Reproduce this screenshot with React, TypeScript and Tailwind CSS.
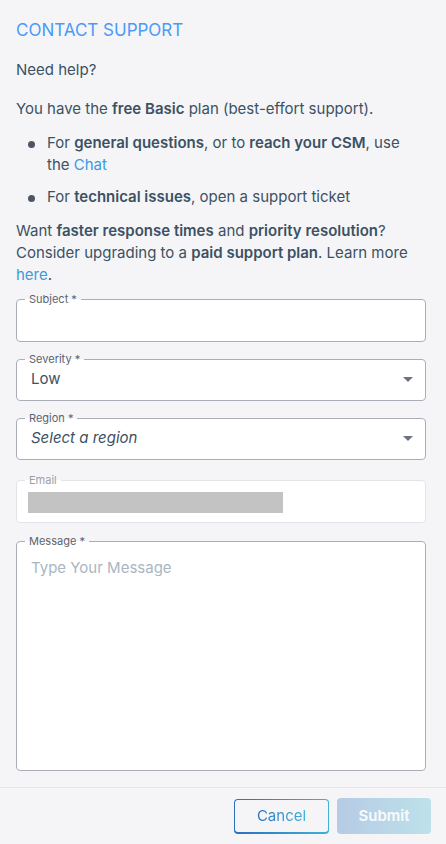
import React from "react";

const font = { fontFamily: "Inter, 'Noto Sans', sans-serif" };

function Caret() {
  return (
    <svg width="10" height="5" viewBox="0 0 10 5" className="shrink-0" aria-hidden="true">
      <path d="M0 0h10L5 5z" fill="#6b7280" />
    </svg>
  );
}

function Field({
  label,
  required = true,
  disabled = false,
  className = "",
  children,
}: {
  label: string;
  required?: boolean;
  disabled?: boolean;
  className?: string;
  children?: React.ReactNode;
}) {
  const border = disabled ? "border-[#e3e4e8]" : "border-[#a9adb8]";
  const labelColor = disabled ? "text-[#9aa0aa]" : "text-[#5b6270]";
  return (
    <fieldset className={`rounded border bg-white px-[14px] ${border} ${className}`}>
      <legend className={`ml-[-6px] px-[4px] text-[11px] leading-[14px] ${labelColor}`}>
        {label}
        {required ? " *" : ""}
      </legend>
      {children}
    </fieldset>
  );
}

export default function App() {
  return (
    <div style={font} className="flex min-h-[844px] w-[446px] flex-col bg-[#f5f5f8] text-[#3c5163]">
      <div className="flex flex-col px-4 pt-[20px]">
        <h1 className="text-[17px] leading-[20px] text-[#4a9af6]">CONTACT SUPPORT</h1>
        <p className="mt-[20px] text-[15px] leading-[20px]">Need help?</p>
        <p className="mt-[18px] text-[15px] leading-[22px]">
          You have the <b className="font-semibold">free Basic</b> plan (best-effort support).
        </p>
        <ul className="mt-[12px] flex flex-col gap-[10px] pl-[31px] pr-[14px] text-[15px] leading-[22px]">
          <li className="relative">
            <span className="absolute left-[-19px] top-[9px] h-[7px] w-[7px] rounded-full bg-[#4d5763]" />
            For <b className="font-semibold">general questions</b>, or to{" "}
            <b className="font-semibold">reach your CSM</b>, use the{" "}
            <span className="text-[#3b9ae1]">Chat</span>
          </li>
          <li className="relative">
            <span className="absolute left-[-19px] top-[9px] h-[7px] w-[7px] rounded-full bg-[#4d5763]" />
            For <b className="font-semibold">technical issues</b>, open a support ticket
          </li>
        </ul>
        <p className="mt-[12px] text-[15px] leading-[22px]">
          Want <b className="font-semibold">faster response times</b> and{" "}
          <b className="font-semibold">priority resolution</b>? Consider upgrading to a{" "}
          <b className="font-semibold">paid support plan</b>. Learn more{" "}
          <span className="text-[#3b9ae1]">here</span>.
        </p>

        <div className="mr-[4px] mt-[6px] flex flex-col gap-[10px]">
          <Field label="Subject" className="h-[50px]" />
          <Field label="Severity" className="h-[49px]">
            <div className="flex items-center justify-between pb-[7px] pt-[3px] text-[15px] leading-[20px]">
              <span>Low</span>
              <span className="mr-[-2px]">
                <Caret />
              </span>
            </div>
          </Field>
          <Field label="Region" className="h-[49px]">
            <div className="flex items-center justify-between pb-[7px] pt-[3px] text-[15px] leading-[20px]">
              <span className="italic">Select a region</span>
              <span className="mr-[-2px]">
                <Caret />
              </span>
            </div>
          </Field>
          <Field label="Email" required={false} disabled className="mt-[3px] h-[50px]">
            <div className="ml-[-3px] pt-[5px]">
              <div className="h-[21px] w-[255px] bg-[#c3c3c3]" />
            </div>
          </Field>
          <Field label="Message" className="mt-[1px] h-[237px]">
            <p className="pt-[10px] text-[15px] leading-[20px] text-[#a9b6c2]">Type Your Message</p>
          </Field>
        </div>
      </div>

      <div className="mt-[16px] flex justify-end gap-[8px] border-t border-[#e6e7ea] px-[15px] pb-[10px] pt-[11px]">
        <div className="rounded-[4px] bg-gradient-to-r from-[#2e6fbd] to-[#3db2d8] p-px">
          <div className="flex h-[32px] w-[93px] items-center justify-center rounded-[3px] bg-[#f5f5f8]">
            <span className="bg-gradient-to-r from-[#2e72bf] to-[#3fb0d6] bg-clip-text text-[15px] text-transparent">
              Cancel
            </span>
          </div>
        </div>
        <div className="mt-[-1px] flex h-[36px] w-[94px] items-center justify-center rounded-[4px] bg-gradient-to-r from-[#b6cbe5] to-[#bde1ea] text-[15px] font-semibold text-white/90">
          Submit
        </div>
      </div>
    </div>
  );
}
